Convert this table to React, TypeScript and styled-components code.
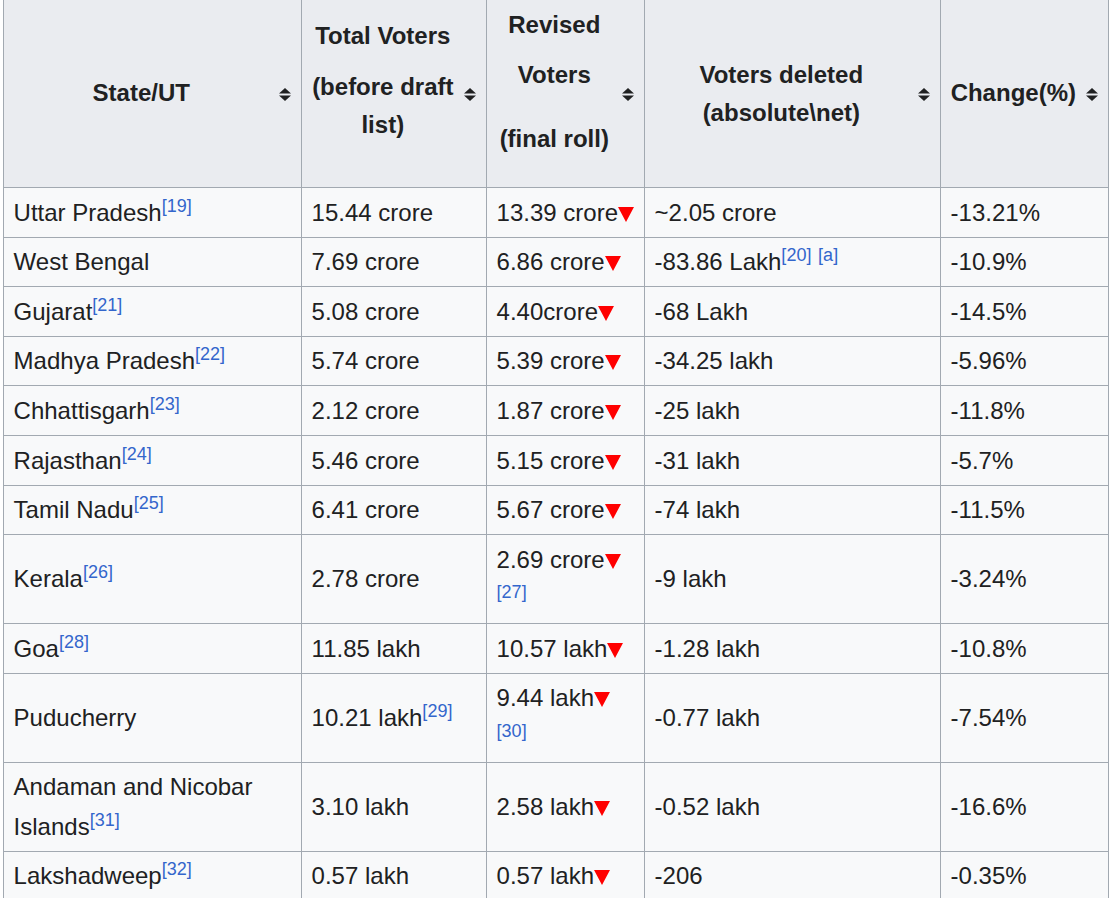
import React from "react";
import styled, { createGlobalStyle } from "styled-components";

const GlobalStyle = createGlobalStyle`
  html, body {
    margin: 0;
    padding: 0;
    background: #ffffff;
  }
  body {
    font-family: "Liberation Sans", Arial, sans-serif;
    color: #202122;
    overflow: hidden;
  }
`;

const Page = styled.div`
  padding-left: 3px;
  width: 1117px;
  height: 898px;
  box-sizing: border-box;
  overflow: hidden;
`;

const Table = styled.table`
  border-collapse: collapse;
  table-layout: fixed;
  width: 1105px;
  margin-top: -1px;
  font-size: 24px;
  color: #202122;
  background: #f8f9fa;
  border: 1px solid #a2a9b1;
`;

const Th = styled.th`
  background: #eaecf0;
  border: 1px solid #a2a9b1;
  padding: 0 10px 0 9.6px;
  font-weight: bold;
  text-align: center;
  vertical-align: top;
`;

const HeadInner = styled.div`
  display: flex;
  align-items: center;
  height: 187px;
`;

const HeadLabel = styled.div`
  flex: 1;
  align-self: stretch;
  display: flex;
  flex-direction: column;
  align-items: center;
`;

const HeadLine = styled.div<{ $mt: number }>`
  margin-top: ${(p) => p.$mt}px;
  line-height: 38.4px;
  white-space: nowrap;
`;

const SortSvg = styled.svg`
  flex: none;
  display: block;
  margin-left: 10px;
  margin-top: 1px;
`;

const Td = styled.td`
  border: 1px solid #a2a9b1;
  padding: 4.6px 9px 4.6px 9.6px;
  line-height: 39.4px;
  vertical-align: middle;
  text-align: left;
`;

const Ref = styled.sup`
  font-size: 75%;
  line-height: 1;
  vertical-align: super;
  color: #3366cc;
`;

const DecreaseSvg = styled.svg`
  display: inline;
  vertical-align: -1px;
`;

const SortIcon = () => (
  <SortSvg width="12" height="13" viewBox="0 0 12 13">
    <polygon points="6,0 12,5.5 0,5.5" fill="#202122" />
    <polygon points="0,7.5 12,7.5 6,13" fill="#202122" />
  </SortSvg>
);

const Dec = () => (
  <DecreaseSvg width="16" height="15" viewBox="0 0 16 15">
    <polygon points="0,0 16,0 8,15" fill="#ff0000" />
  </DecreaseSvg>
);

const r = (n: string) => <Ref>[{n}]</Ref>;

type Head = { lines: [string, number][] };

const heads: Head[] = [
  { lines: [["State/UT", 74]] },
  {
    lines: [
      ["Total Voters", 17],
      ["(before draft", 12.6],
      ["list)", 0],
    ],
  },
  {
    lines: [
      ["Revised", 5.5],
      ["Voters", 11.6],
      ["(final roll)", 26],
    ],
  },
  {
    lines: [
      ["Voters deleted", 55.7],
      ["(absolute\\net)", 0.4],
    ],
  },
  { lines: [["Change(%)", 74]] },
];

const rows: React.ReactNode[][] = [
  [<>Uttar Pradesh{r("19")}</>, "15.44 crore", <>13.39 crore<Dec /></>, "~2.05 crore", "-13.21%"],
  ["West Bengal", "7.69 crore", <>6.86 crore<Dec /></>, <>-83.86 Lakh{r("20")} {r("a")}</>, "-10.9%"],
  [<>Gujarat{r("21")}</>, "5.08 crore", <>4.40crore<Dec /></>, "-68 Lakh", "-14.5%"],
  [<>Madhya Pradesh{r("22")}</>, "5.74 crore", <>5.39 crore<Dec /></>, "-34.25 lakh", "-5.96%"],
  [<>Chhattisgarh{r("23")}</>, "2.12 crore", <>1.87 crore<Dec /></>, "-25 lakh", "-11.8%"],
  [<>Rajasthan{r("24")}</>, "5.46 crore", <>5.15 crore<Dec /></>, "-31 lakh", "-5.7%"],
  [<>Tamil Nadu{r("25")}</>, "6.41 crore", <>5.67 crore<Dec /></>, "-74 lakh", "-11.5%"],
  [<>Kerala{r("26")}</>, "2.78 crore", <>2.69 crore<Dec />{r("27")}</>, "-9 lakh", "-3.24%"],
  [<>Goa{r("28")}</>, "11.85 lakh", <>10.57 lakh<Dec /></>, "-1.28 lakh", "-10.8%"],
  ["Puducherry", <>10.21 lakh{r("29")}</>, <>9.44 lakh<Dec />{r("30")}</>, "-0.77 lakh", "-7.54%"],
  [<>Andaman and Nicobar Islands{r("31")}</>, "3.10 lakh", <>2.58 lakh<Dec /></>, "-0.52 lakh", "-16.6%"],
  [<>Lakshadweep{r("32")}</>, "0.57 lakh", <>0.57 lakh<Dec /></>, "-206", "-0.35%"],
];

const colWidths = [298, 185, 158, 296, 168];

export default function App() {
  return (
    <>
      <GlobalStyle />
      <Page>
        <Table>
          <colgroup>
            {colWidths.map((w, i) => (
              <col key={i} style={{ width: w }} />
            ))}
          </colgroup>
          <thead>
            <tr>
              {heads.map((h, i) => (
                <Th key={i}>
                  <HeadInner>
                    <HeadLabel>
                      {h.lines.map(([t, mt], j) => (
                        <HeadLine key={j} $mt={mt}>
                          {t}
                        </HeadLine>
                      ))}
                    </HeadLabel>
                    <SortIcon />
                  </HeadInner>
                </Th>
              ))}
            </tr>
          </thead>
          <tbody>
            {rows.map((row, i) => (
              <tr key={i}>
                {row.map((c, j) => (
                  <Td key={j}>{c}</Td>
                ))}
              </tr>
            ))}
          </tbody>
        </Table>
      </Page>
    </>
  );
}
